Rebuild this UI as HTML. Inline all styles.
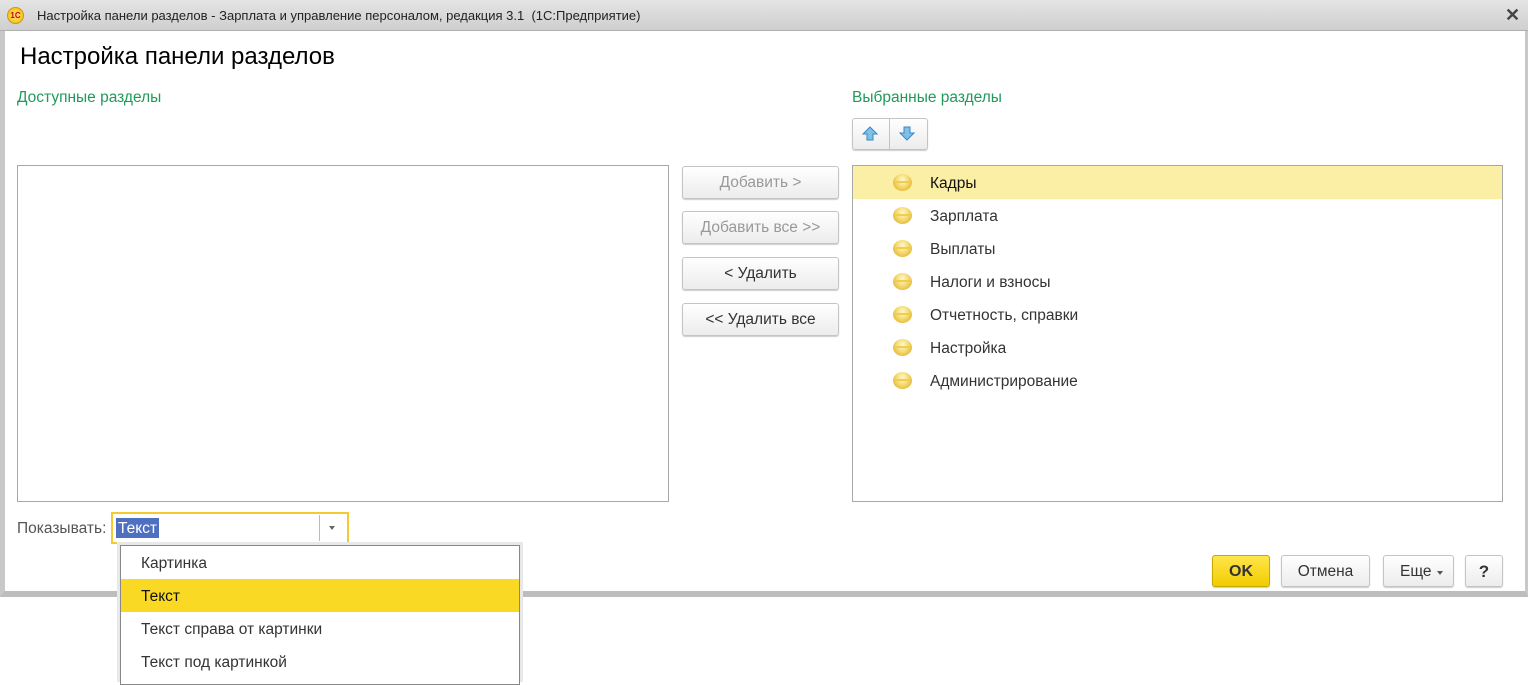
<!DOCTYPE html><html><head><meta charset="utf-8"><style>
*{box-sizing:border-box;margin:0;padding:0}
body{width:1528px;height:678px;background:#fff;position:relative;overflow:hidden;font-family:"Liberation Sans",Arial,sans-serif;font-size:15.5px;color:#333}
.a{position:absolute}
.win{left:0;top:0;width:1528px;height:597px;background:#fff;border-left:5px solid #c8c8c8;border-right:3px solid #c8c8c8;border-bottom:6px solid #bdbdbd}
.title{left:0;top:0;width:1528px;height:31px;background:linear-gradient(#e4e4e4,#cfcfcf);border-bottom:1px solid #b0b0b0;font-size:13px;color:#222;line-height:31px;padding-left:37px}
.btn{border:1px solid #c4c4c4;border-radius:3px;background:linear-gradient(#fff,#ececec);text-align:center;line-height:32px;box-shadow:0 1px 1px #ccc}
.list{border:1px solid #a8a8a8;background:#fff}
.row{position:absolute;left:0;right:0;height:33px;line-height:35px;padding-left:77px;color:#333}
.ball{position:absolute;left:40px;top:8px;width:19px;height:17px;border-radius:50%;background:radial-gradient(ellipse at 50% 35%,#fff8d0 0,#f6de7a 40%,#e2b833 80%,#d4a628 100%)}
.ball:after{content:"";position:absolute;left:2px;right:2px;top:7px;height:2px;background:#f0cd50}
.it{position:absolute;left:0;right:0;height:33px;line-height:35px;padding-left:20px;color:#333}
</style></head><body>
<div class="a win"></div>
<div class="a title">Настройка панели разделов - Зарплата и управление персоналом, редакция 3.1 &nbsp;(1С:Предприятие)</div>
<div class="a" style="left:7px;top:7px;width:17px;height:17px;border-radius:50%;background:radial-gradient(#ffe97a,#f1b400);border:1px solid #d09a00;font-size:8px;font-weight:bold;color:#c00;line-height:15px;text-align:center">1С</div>
<div class="a" style="left:1505px;top:5px;font-size:18px;font-weight:bold;color:#444">✕</div>
<div class="a" style="left:20px;top:43px;font-size:24px;color:#000">Настройка панели разделов</div>
<div class="a" style="left:17px;top:89px;color:#1f9a5a">Доступные разделы</div>
<div class="a" style="left:852px;top:89px;color:#1f9a5a">Выбранные разделы</div>
<div class="a btn" style="left:852px;top:118px;width:76px;height:32px"></div>
<div class="a" style="left:889px;top:119px;width:1px;height:30px;background:#c4c4c4"></div>
<svg class="a" style="left:861px;top:125px" width="18" height="18"><path d="M9 2 L16 9 L12 9 L12 15 L6 15 L6 9 L2 9Z" fill="#7fc0e8" stroke="#3a87c2"/></svg>
<svg class="a" style="left:898px;top:124px" width="18" height="18"><path d="M9 16 L16 9 L12 9 L12 3 L6 3 L6 9 L2 9Z" fill="#7fc0e8" stroke="#3a87c2"/></svg>
<div class="a list" style="left:17px;top:165px;width:652px;height:337px"></div>
<div class="a list" style="left:852px;top:165px;width:651px;height:337px">
<div class="row" style="top:0;background:#fbeea5;color:#111">Кадры<i class="ball"></i></div>
<div class="row" style="top:33px">Зарплата<i class="ball"></i></div>
<div class="row" style="top:66px">Выплаты<i class="ball"></i></div>
<div class="row" style="top:99px">Налоги и взносы<i class="ball"></i></div>
<div class="row" style="top:132px">Отчетность, справки<i class="ball"></i></div>
<div class="row" style="top:165px">Настройка<i class="ball"></i></div>
<div class="row" style="top:198px">Администрирование<i class="ball"></i></div>
</div>
<div class="a btn" style="left:682px;top:166px;width:157px;height:33px;color:#999">Добавить &gt;</div>
<div class="a btn" style="left:682px;top:211px;width:157px;height:33px;color:#999">Добавить все &gt;&gt;</div>
<div class="a btn" style="left:682px;top:257px;width:157px;height:33px;color:#333">&lt; Удалить</div>
<div class="a btn" style="left:682px;top:303px;width:157px;height:33px;color:#333">&lt;&lt; Удалить все</div>
<div class="a" style="left:17px;top:520px;color:#555">Показывать:</div>
<div class="a" style="left:111px;top:512px;width:238px;height:32px;border:2px solid #f5c932;background:#fff"></div>
<div class="a" style="left:116px;top:518px;height:20px;line-height:21px;background:#4f6fc0;color:#fff;padding:0 2px">Текст</div>
<div class="a" style="left:319px;top:515px;width:1px;height:26px;background:#bbb"></div>
<div class="a" style="left:329px;top:526px;border:3px solid transparent;border-top:4px solid #666"></div>
<div class="a" style="left:117px;top:542px;width:406px;height:140px;background:#e8e8e8"></div>
<div class="a" style="left:120px;top:545px;width:400px;height:140px;background:#fff;border:1px solid #888">
<div class="it" style="top:0">Картинка</div>
<div class="it" style="top:33px;background:#f9d923;color:#111">Текст</div>
<div class="it" style="top:66px">Текст справа от картинки</div>
<div class="it" style="top:99px">Текст под картинкой</div>
</div>
<div class="a btn" style="left:1212px;top:555px;width:58px;height:32px;background:linear-gradient(#ffe64a,#f2cc00);border-color:#c9a800;font-weight:bold;color:#333;font-size:16px">OK</div>
<div class="a btn" style="left:1281px;top:555px;width:89px;height:32px">Отмена</div>
<div class="a btn" style="left:1383px;top:555px;width:71px;height:32px;text-align:left;padding-left:16px">Еще</div>
<div class="a" style="left:1437px;top:571px;border:3px solid transparent;border-top:4px solid #555"></div>
<div class="a btn" style="left:1465px;top:555px;width:38px;height:32px;font-weight:bold;font-size:17px">?</div>
</body></html>
